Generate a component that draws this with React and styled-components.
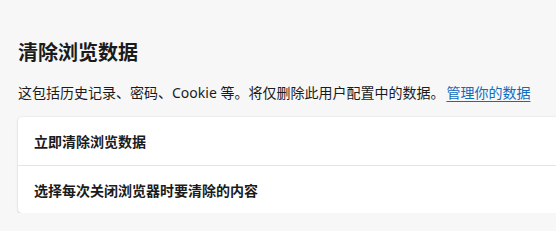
import React from "react";
import styled, { createGlobalStyle } from "styled-components";

const Global = createGlobalStyle`
  html, body {
    margin: 0;
    padding: 0;
    background: #f7f7f7;
    overflow: hidden;
  }
  body {
    font-family: "Noto Sans", "Noto Sans CJK SC", sans-serif;
    color: #1b1b1b;
  }
  * { box-sizing: border-box; }
`;

const Page = styled.div`
  width: 640px;
  padding: 37px 0 0 18px;
  display: flex;
  flex-direction: column;
`;

const Title = styled.h1`
  margin: 0;
  font-size: 20px;
  line-height: 32px;
  font-weight: 700;
  font-family: "Noto Sans", "Noto Sans CJK SC", sans-serif;
`;

const Description = styled.p`
  margin: 14px 0 0 0;
  font-size: 14px;
  line-height: 20px;
  font-weight: 400;
`;

const Link = styled.a`
  margin-left: 2px;
  color: #0f6cbd;
  text-decoration: underline;
  text-underline-offset: 3px;
  cursor: pointer;
`;

const Card = styled.div`
  margin-top: 14px;
  background: #ffffff;
  border-radius: 4px;
  box-shadow: 0 0.5px 1.5px rgba(0, 0, 0, 0.12), 0 1px 3px rgba(0, 0, 0, 0.1);
  display: flex;
  flex-direction: column;
`;

const Row = styled.div`
  height: 48px;
  display: flex;
  align-items: center;
  padding: 0 16px;
  font-size: 14px;
  font-weight: 600;
  border-top: ${(p) => (p.$divider ? "1px solid #e5e5e5" : "none")};
`;

export default function App() {
  return (
    <>
      <Global />
      <Page>
        <Title>清除浏览数据</Title>
        <Description>
          这包括历史记录、密码、Cookie 等。将仅删除此用户配置中的数据。<Link>管理你的数据</Link>
        </Description>
        <Card>
          <Row>立即清除浏览数据</Row>
          <Row $divider>选择每次关闭浏览器时要清除的内容</Row>
        </Card>
      </Page>
    </>
  );
}
